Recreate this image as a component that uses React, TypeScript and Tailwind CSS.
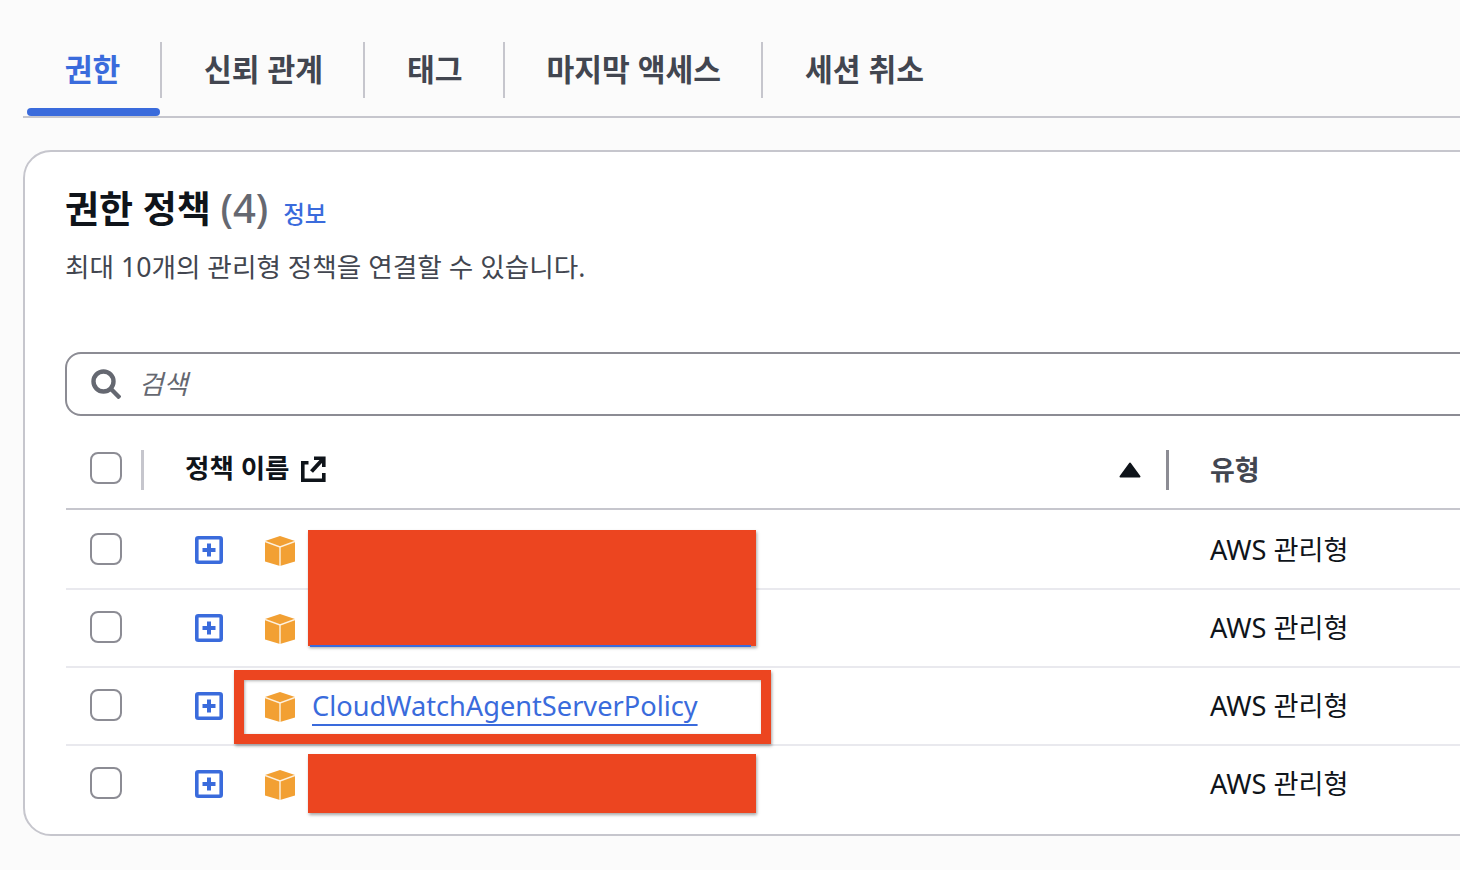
import { ReactNode } from 'react';

const tabs = ['권한', '신뢰 관계', '태그', '마지막 액세스', '세션 취소'];

function Checkbox({ className = '' }: { className?: string }) {
  return <div className={`h-8 w-8 rounded-lg border-2 border-[#8c8c94] bg-white ${className}`} />;
}

function ExpandIcon() {
  return (
    <svg width="28" height="28" viewBox="0 0 28 28" className="mt-0.5">
      <rect x="1.8" y="1.8" width="24.4" height="24.4" rx="1.5" fill="#fff" stroke="#3a6bdc" strokeWidth="3.6" />
      <path d="M14 7.5v13M7.5 14h13" stroke="#3a6bdc" strokeWidth="4" fill="none" />
    </svg>
  );
}

function CubeIcon() {
  return (
    <svg width="30" height="30" viewBox="0 0 30 30" className="mt-1">
      <path d="M15 0 L30 5 V25.5 L15 30 L0 25.5 V5 Z" fill="#f2a033" />
      <path d="M0 5.5 L15 11 L30 5.5 M15 11 V30" fill="none" stroke="#fdf1df" strokeWidth="1.4" />
    </svg>
  );
}

function ExternalIcon() {
  return (
    <svg width="25" height="26" viewBox="0 0 25 26" fill="none" stroke="#0f141a" strokeWidth="3.6">
      <path d="M7.5 6.8H1.8V24.2H22.8V17" />
      <path d="M13 2.2H22.8V11" />
      <path d="M22 3 10.5 15.5" strokeWidth="4" />
    </svg>
  );
}

function Row({ first, last, children }: { first?: boolean; last?: boolean; children?: ReactNode }) {
  return (
    <div
      className={`relative grid grid-cols-[105px_70px_945px_1fr] items-center pl-6 ${first ? 'h-[80px]' : last ? 'h-[78px] pb-1' : 'h-[78px] pb-0.5'} ${last ? '' : 'border-b-2 border-[#e9e9ee]'}`}
    >
      <Checkbox />
      <ExpandIcon />
      <div className="flex items-center gap-[17px]">
        <CubeIcon />
        {children}
      </div>
      <div className="pt-px text-[27.2px] text-[#0f141a]">AWS 관리형</div>
    </div>
  );
}

export default function App() {
  return (
    <div
      className="h-[870px] overflow-hidden bg-[#fbfbfb] pl-[23px] pt-[42px]"
      style={{ fontFamily: '"Noto Sans", "Noto Sans CJK KR", sans-serif' }}
    >
      <div className="flex h-[76px] items-start border-b-2 border-[#c6c6cd]">
        {tabs.map((tab, i) => (
          <div
            key={tab}
            className={`relative flex h-14 items-center text-[30.2px] font-semibold ${
              i === 0
                ? 'ml-1 w-[133px] justify-center pr-[2px] text-[#3a6bdc]'
                : i === tabs.length - 1
                  ? 'border-l-2 border-[#c6c6cd] pl-[42px] text-[#424650]'
                  : 'border-l-2 border-[#c6c6cd] pl-[42px] pr-[40px] text-[#424650]'
            }`}
          >
            {tab}
            {i === 0 && <div className="absolute left-0 top-[66px] h-2 w-[133px] rounded-md bg-[#3a6bdc]" />}
          </div>
        ))}
      </div>

      <div className="mr-[-60px] mt-[32px] h-[686px] rounded-l-[28px] border-2 border-[#c6c6cd] bg-white pl-10 pt-[29px]">
        <div className="flex items-baseline gap-[15px]">
          <h2 className="text-[37px] font-bold text-[#0f141a]">
            권한 정책 <span className="text-[40px] font-medium leading-none text-[#656871]">(4)</span>
          </h2>
          <span className="text-[23.5px] font-medium text-[#3a6bdc]">정보</span>
        </div>
        <p className="mt-[11px] text-[26.65px] text-[#424650]">최대 10개의 관리형 정책을 연결할 수 있습니다.</p>

        <div className="mt-[65px] flex h-16 items-center gap-[18px] rounded-2xl border-2 border-[#8c8c94] bg-white pl-6">
          <svg width="30" height="30" viewBox="0 0 30 30" fill="none" stroke="#656871" strokeWidth="4.4">
            <circle cx="12.5" cy="12.5" r="10" />
            <path d="M20 20l9 9" />
          </svg>
          <span className="text-[26.5px] italic text-[#656871]">검색</span>
        </div>

        <div className="ml-px">
          <div className="grid h-[94px] grid-cols-[51px_1025px_44px_1fr] items-center border-b-2 border-[#c6c6cd] pl-6 pt-4">
            <Checkbox className="mb-1" />
            <div className="flex h-10 items-center border-l-[3px] border-[#c6c6cd] pl-[41px]">
              <span className="mb-[3px] text-[26.5px] font-bold text-[#0f141a]">정책 이름</span>
              <span className="mb-[2px] ml-3">
                <ExternalIcon />
              </span>
              <svg className="ml-auto mr-[25px]" width="22" height="16" viewBox="0 0 22 16">
                <path d="M11 1.5 20.5 14.5H1.5Z" fill="#0f141a" stroke="#0f141a" strokeWidth="2" strokeLinejoin="round" />
              </svg>
            </div>
            <div className="h-10 border-l-[3px] border-[#8c8c94]" />
            <div className="text-[27px] font-semibold text-[#424650]">유형</div>
          </div>

          <Row first>
            <div className="absolute left-[242px] top-[20px] z-10 h-[116px] w-[448px] bg-[#ec4520] shadow-[1px_2px_3px_rgba(0,0,0,0.35)]" />
          </Row>
          <Row>
            <div className="absolute left-[244px] top-[55px] z-20 h-[2px] w-[441px] bg-[#3a6bdc]" />
          </Row>
          <Row>
            <a className="mt-0.5 text-[27.2px] text-[#3a6bdc] underline decoration-2 underline-offset-[8px] [text-decoration-skip-ink:none]">CloudWatchAgentServerPolicy</a>
            <div className="absolute left-[168px] top-[2px] h-[74px] w-[537px] border-[10px] border-[#ec4520] shadow-[1px_2px_3px_rgba(0,0,0,0.35),inset_1px_1px_3px_rgba(0,0,0,0.3)]" />
          </Row>
          <Row last>
            <div className="absolute left-[242px] top-[8px] h-[59px] w-[448px] bg-[#ec4520] shadow-[1px_2px_3px_rgba(0,0,0,0.35)]" />
          </Row>
        </div>
      </div>
    </div>
  );
}
